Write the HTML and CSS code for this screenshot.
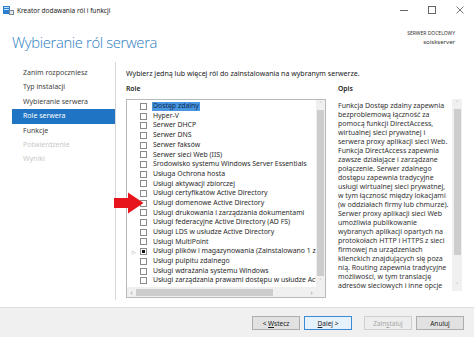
FILE: index.html
```html
<!DOCTYPE html>
<html lang="pl">
<head>
  <meta charset="UTF-8">
  <meta name="viewport" content="width=device-width, initial-scale=1.0">
  <title>Kreator dodawania ról i funkcji</title>
  <link rel="stylesheet" href="styles.css">
</head>
<body>
  <div class="window">
    <div class="titlebar">
      <svg class="app-icon" width="11" height="10" viewBox="0 0 11 10">
        <rect x="0" y="1" width="7" height="8" fill="#2a7fd0"/>
        <rect x="1" y="2" width="5" height="1" fill="#bfe0ff"/>
        <rect x="1" y="4" width="5" height="1" fill="#bfe0ff"/>
        <rect x="6" y="5" width="5" height="5" fill="#7a8a99"/>
        <rect x="7" y="6" width="3" height="3" fill="#e4e8ec"/>
      </svg>
      <span class="title-text">Kreator dodawania ról i funkcji</span>
      <div class="controls">
        <span class="ctl ctl-min"></span>
        <span class="ctl ctl-max"></span>
        <span class="ctl ctl-close">
          <svg width="8" height="8" viewBox="0 0 8 8"><path d="M0.5 0.5L7.5 7.5M7.5 0.5L0.5 7.5" stroke="#555" stroke-width="0.8"/></svg>
        </span>
      </div>
    </div>

    <div class="header">
      <h1>Wybieranie ról serwera</h1>
      <div class="target">
        <div class="target-caption">SERWER DOCELOWY</div>
        <div>soiskserver</div>
      </div>
    </div>

    <div class="body">
      <nav class="steps">
        <div class="step">Zanim rozpoczniesz</div>
        <div class="step">Typ instalacji</div>
        <div class="step">Wybieranie serwera</div>
        <div class="step active">Role serwera</div>
        <div class="step">Funkcje</div>
        <div class="step disabled">Potwierdzenie</div>
        <div class="step disabled">Wyniki</div>
      </nav>

      <main class="content">
        <p class="intro">Wybierz jedną lub więcej ról do zainstalowania na wybranym serwerze.</p>
        <div class="panes">
          <section class="roles">
            <h2>Role</h2>
            <div class="listbox">
              <ul class="role-list">
                <li><span class="exp"></span><span class="chk"></span><span class="label selected">Dostęp zdalny</span></li>
                <li><span class="exp"></span><span class="chk"></span><span class="label">Hyper-V</span></li>
                <li><span class="exp"></span><span class="chk"></span><span class="label">Serwer DHCP</span></li>
                <li><span class="exp"></span><span class="chk"></span><span class="label">Serwer DNS</span></li>
                <li><span class="exp"></span><span class="chk"></span><span class="label">Serwer faksów</span></li>
                <li><span class="exp"></span><span class="chk"></span><span class="label">Serwer sieci Web (IIS)</span></li>
                <li><span class="exp"></span><span class="chk"></span><span class="label">Środowisko systemu Windows Server Essentials</span></li>
                <li><span class="exp"></span><span class="chk"></span><span class="label">Usługa Ochrona hosta</span></li>
                <li><span class="exp"></span><span class="chk"></span><span class="label">Usługi aktywacji zbiorczej</span></li>
                <li><span class="exp"></span><span class="chk"></span><span class="label">Usługi certyfikatów Active Directory</span></li>
                <li><span class="exp"></span><span class="chk"></span><span class="label">Usługi domenowe Active Directory</span></li>
                <li><span class="exp"></span><span class="chk"></span><span class="label">Usługi drukowania i zarządzania dokumentami</span></li>
                <li><span class="exp"></span><span class="chk"></span><span class="label">Usługi federacyjne Active Directory (AD FS)</span></li>
                <li><span class="exp"></span><span class="chk"></span><span class="label">Usługi LDS w usłudze Active Directory</span></li>
                <li><span class="exp"></span><span class="chk"></span><span class="label">Usługi MultiPoint</span></li>
                <li><span class="exp">&#9655;</span><span class="chk partial"></span><span class="label">Usługi plików i magazynowania (Zainstalowano 1 z 12)</span></li>
                <li><span class="exp"></span><span class="chk"></span><span class="label">Usługi pulpitu zdalnego</span></li>
                <li><span class="exp"></span><span class="chk"></span><span class="label">Usługi wdrażania systemu Windows</span></li>
                <li><span class="exp"></span><span class="chk"></span><span class="label">Usługi zarządzania prawami dostępu w usłudze Active Directory</span></li>
              </ul>
              <div class="vscroll">
                <span class="arr">&#708;</span>
                <span class="thumb"></span>
                <span class="arr">&#709;</span>
              </div>
              <div class="hscroll">
                <span class="arr">&#8249;</span>
                <span class="thumb"></span>
                <span class="arr">&#8250;</span>
              </div>
            </div>
          </section>

          <section class="desc">
            <h2>Opis</h2>
            <div class="desc-box">
              <p class="desc-text">Funkcja Dostęp zdalny zapewnia<br>bezproblemową łączność za<br>pomocą funkcji DirectAccess,<br>wirtualnej sieci prywatnej i<br>serwera proxy aplikacji sieci Web.<br>Funkcja DirectAccess zapewnia<br>zawsze działające i zarządzane<br>połączenie. Serwer zdalnego<br>dostępu zapewnia tradycyjne<br>usługi wirtualnej sieci prywatnej,<br>w tym łączność między lokacjami<br>(w oddziałach firmy lub chmurze).<br>Serwer proxy aplikacji sieci Web<br>umożliwia publikowanie<br>wybranych aplikacji opartych na<br>protokołach HTTP i HTTPS z sieci<br>firmowej na urządzeniach<br>klienckich znajdujących się poza<br>nią. Routing zapewnia tradycyjne<br>możliwości, w tym translację<br>adresów sieciowych i inne opcje</p>
              <div class="vscroll">
                <span class="arr">&#708;</span>
                <span class="thumb"></span>
                <span class="arr">&#709;</span>
              </div>
            </div>
          </section>
        </div>
      </main>
    </div>

    <div class="footer">
      <button class="btn">&lt; <u>W</u>stecz</button>
      <button class="btn default"><u>D</u>alej &gt;</button>
      <button class="btn disabled gap">Zain<u>s</u>taluj</button>
      <button class="btn">Anuluj</button>
    </div>

    <svg class="red-arrow" width="30" height="22" viewBox="0 0 30 22">
      <rect x="0" y="6" width="15" height="10" fill="#e8141c"/>
      <polygon points="14,0.5 29.5,11 14,21.5" fill="#e8141c"/>
    </svg>
  </div>
</body>
</html>
```

FILE: styles.css
```css
body {
  margin: 0;
  padding: 0;
  background-color: #fff;
  font-family: "Noto Sans", Arial, sans-serif;
  color: #333;
}
.window {
  position: relative;
  width: 474px;
  height: 337px;
  overflow: hidden;
  display: flex;
  flex-direction: column;
  background: #fff;
}

/* title bar */
.titlebar {
  height: 20px;
  display: flex;
  align-items: center;
  padding-left: 3px;
  font-size: 6.5px;
  color: #222;
}
.app-icon {
  margin-right: 3px;
}
.controls {
  margin-left: auto;
  display: flex;
  height: 20px;
}
.ctl {
  width: 28px;
  display: flex;
  align-items: center;
  justify-content: center;
}
.ctl-min::before {
  content: "";
  width: 8px;
  height: 1px;
  background: #666;
}
.ctl-max::before {
  content: "";
  width: 6px;
  height: 6px;
  border: 1px solid #666;
}

/* header */
.header {
  height: 42px;
  display: flex;
  align-items: center;
  padding: 0 19px 0 12px;
}
h1 {
  margin: 0;
  font-family: "Open Sans", "Noto Sans", sans-serif;
  font-weight: 300;
  font-size: 14.8px;
  letter-spacing: -0.35px;
  color: #2b7cc0;
  padding-top: 1px;
}
.target {
  margin-left: auto;
  text-align: right;
  font-size: 6px;
  line-height: 9px;
  color: #333;
  margin-top: -6px;
}
.target-caption {
  font-size: 5px;
}

/* body */
.body {
  flex: 1;
  display: flex;
  min-height: 0;
}
.steps {
  width: 116px;
  border-right: 1px solid #d6d6d6;
  padding-top: 4px;
  margin-bottom: 7px;
  box-sizing: border-box;
}
.step {
  height: 14.4px;
  line-height: 14.4px;
  margin-left: 12px;
  padding-left: 11px;
  font-size: 7px;
  color: #444;
}
.step.active {
  background: #1f74c4;
  color: #fff;
}
.step.disabled {
  color: #c9c9c9;
}

.content {
  flex: 1;
  padding: 6px 0 0 10px;
  font-size: 6.9px;
}
.intro {
  margin: 0;
  line-height: 10px;
  font-size: 7.05px;
  color: #222;
}
.panes {
  display: flex;
  gap: 12px;
}
h2 {
  margin: 6px 0 5px;
  font-size: 6.8px;
  line-height: 10px;
  font-weight: 600;
  color: #222;
}

/* roles list */
.roles {
  width: 200px;
}
.listbox {
  height: 199px;
  border: 1px solid #b9b9b9;
  box-sizing: border-box;
  display: grid;
  grid-template-columns: minmax(0, 1fr) 9px;
  grid-template-rows: minmax(0, 1fr) 10px;
}
.role-list {
  list-style: none;
  margin: 0;
  padding: 1.5px 0 0;
  overflow: hidden;
}
.role-list li {
  height: 9.7px;
  display: flex;
  align-items: center;
  white-space: nowrap;
  color: #2a2a2a;
}
.exp {
  flex: none;
  width: 13px;
  text-align: center;
  font-size: 5px;
  color: #888;
}
.chk {
  flex: none;
  width: 7px;
  height: 7px;
  border: 1px solid #8a8a8a;
  box-sizing: border-box;
  margin-right: 5px;
  background: #fff;
  display: flex;
  align-items: center;
  justify-content: center;
}
.chk.partial::after {
  content: "";
  width: 3px;
  height: 3px;
  background: #111;
}
.label {
  padding: 0 1px;
  height: 8.5px;
  line-height: 8.5px;
}
.label.selected {
  background-color: #4a96e0;
  color: #0c2a50;
}

.vscroll {
  background: #f0f0f0;
  display: flex;
  flex-direction: column;
  align-items: center;
}
.vscroll .arr {
  height: 10px;
  line-height: 10px;
  font-size: 7px;
  color: #999;
}
.vscroll .thumb {
  flex: 1;
  width: 7px;
  background: #cdcdcd;
  margin: 0 0 1px;
}
.hscroll {
  grid-column: 1 / 3;
  background: #f0f0f0;
  display: flex;
  align-items: center;
  padding-right: 9px;
}
.hscroll .arr {
  width: 9px;
  text-align: center;
  font-size: 7px;
  color: #999;
}
.hscroll .thumb {
  height: 7px;
  width: 137px;
  background: #cdcdcd;
  margin-right: auto;
}

/* description */
.desc {
  width: 124px;
}
.desc-box {
  display: flex;
  height: 192px;
}
.desc-text {
  flex: 1;
  margin: 2px 0 0;
  font-size: 7px;
  line-height: 9px;
  white-space: nowrap;
  color: #333;
  overflow: hidden;
}
.desc-box .vscroll {
  flex: none;
  width: 10px;
}
.desc-box .vscroll .thumb {
  flex: none;
  height: 146px;
  margin-bottom: auto;
}

/* footer */
.footer {
  height: 30px;
  background: #f0f0f0;
  border-top: 1px solid #dfdfdf;
  box-sizing: border-box;
  display: flex;
  align-items: center;
  justify-content: flex-end;
  gap: 4px;
  padding: 1px 10px 0 0;
}
.btn {
  width: 48px;
  height: 14px;
  padding: 0;
  font-family: "Noto Sans", Arial, sans-serif;
  font-size: 6.5px;
  color: #222;
  background: #e1e1e1;
  border: 1px solid #adadad;
}
.btn.default {
  background: #e5f1fb;
  border: 1px solid #3c8ad6;
}
.btn.disabled {
  color: #a8a8a8;
  background: #ededed;
  border-color: #cfcfcf;
}
.btn.gap {
  margin-left: 8px;
}

.red-arrow {
  position: absolute;
  left: 114px;
  top: 192px;
}
```
